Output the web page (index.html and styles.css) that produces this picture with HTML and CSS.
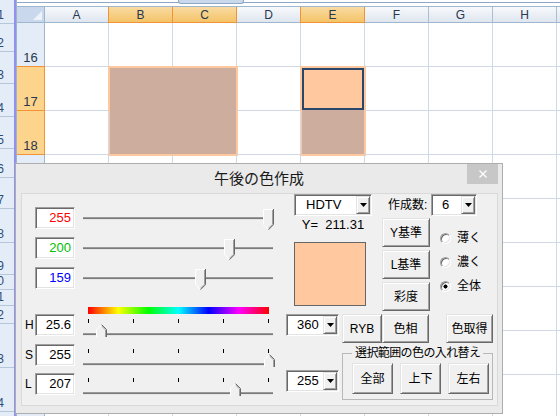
FILE: index.html
```html
<!DOCTYPE html>
<html lang="ja">
<head>
<meta charset="utf-8">
<title>午後の色作成</title>
<link rel="stylesheet" href="styles.css">
</head>
<body>
<div class="screen">
  <div class="backwin">
    <div class="backrows">
      <div>1</div><div>2</div><div>3</div><div>4</div><div>5</div><div>6</div><div>7</div><div>8</div><div>9</div><div>10</div><div>11</div><div>12</div><div>13</div><div>14</div><div>15</div>
    </div>
  </div>
  <div class="splitter"></div>
  <div class="sheet">
    <div class="topstrip"><div class="fxtab"></div></div>
    <div class="grid">
      <div class="corner"><span class="tri"></span></div>
      <div class="ch">A</div><div class="ch sel">B</div><div class="ch sel">C</div><div class="ch">D</div><div class="ch sel">E</div><div class="ch">F</div><div class="ch">G</div><div class="ch">H</div><div class="ch">I</div>

      <div class="rh">16</div><div class="c"></div><div class="c"></div><div class="c"></div><div class="c"></div><div class="c"></div><div class="c"></div><div class="c"></div><div class="c"></div><div class="c"></div>

      <div class="rh sel">17</div><div class="c"></div><div class="range bc"></div><div class="c"></div><div class="range e"><div class="active"></div></div><div class="c"></div><div class="c"></div><div class="c"></div><div class="c"></div>

      <div class="rh sel">18</div><div class="c"></div><div class="c"></div><div class="c"></div><div class="c"></div><div class="c"></div><div class="c"></div>

      <div class="rh">19</div><div class="c"></div><div class="c"></div><div class="c"></div><div class="c"></div><div class="c"></div><div class="c"></div><div class="c"></div><div class="c"></div><div class="c"></div>
      <div class="rh">20</div><div class="c"></div><div class="c"></div><div class="c"></div><div class="c"></div><div class="c"></div><div class="c"></div><div class="c"></div><div class="c"></div><div class="c"></div>
      <div class="rh">21</div><div class="c"></div><div class="c"></div><div class="c"></div><div class="c"></div><div class="c"></div><div class="c"></div><div class="c"></div><div class="c"></div><div class="c"></div>
      <div class="rh">22</div><div class="c"></div><div class="c"></div><div class="c"></div><div class="c"></div><div class="c"></div><div class="c"></div><div class="c"></div><div class="c"></div><div class="c"></div>
      <div class="rh">23</div><div class="c"></div><div class="c"></div><div class="c"></div><div class="c"></div><div class="c"></div><div class="c"></div><div class="c"></div><div class="c"></div><div class="c"></div>
      <div class="rh">24</div><div class="c"></div><div class="c"></div><div class="c"></div><div class="c"></div><div class="c"></div><div class="c"></div><div class="c"></div><div class="c"></div><div class="c"></div>
    </div>
  </div>

  <div class="dialog">
    <div class="titlebar">
      <span></span>
      <span class="title">午後の色作成</span>
      <span class="close"><svg width="8" height="8" viewBox="0 0 8 8"><path d="M0.5 0.5L7.5 7.5M7.5 0.5L0.5 7.5" stroke="#fff" stroke-width="1.2"/></svg></span>
    </div>
    <div class="panel">
      <div class="leftcol">
        <div class="row">
          <span class="lbl"></span>
          <div class="tb red">255</div>
          <div class="slider">
            <div class="track"></div>
            <svg class="thumb dn" style="left:180px" width="11" height="21" viewBox="0 0 11 21"><path d="M0 0H11V15.5L5.5 21L0 15.5Z" fill="#f0f0f0"/><path d="M0.5 15.5V0.5H10" fill="none" stroke="#fff"/><path d="M10.5 0V15.7L5.5 20.7" fill="none" stroke="#696969"/><path d="M9.5 1V15.3L5.5 19.3" fill="none" stroke="#a0a0a0"/><path d="M0.7 15.7L5 20" fill="none" stroke="#fff"/></svg>
          </div>
        </div>
        <div class="row">
          <span class="lbl"></span>
          <div class="tb green">200</div>
          <div class="slider">
            <div class="track"></div>
            <svg class="thumb dn" style="left:141px" width="11" height="21" viewBox="0 0 11 21"><path d="M0 0H11V15.5L5.5 21L0 15.5Z" fill="#f0f0f0"/><path d="M0.5 15.5V0.5H10" fill="none" stroke="#fff"/><path d="M10.5 0V15.7L5.5 20.7" fill="none" stroke="#696969"/><path d="M9.5 1V15.3L5.5 19.3" fill="none" stroke="#a0a0a0"/><path d="M0.7 15.7L5 20" fill="none" stroke="#fff"/></svg>
          </div>
        </div>
        <div class="row">
          <span class="lbl"></span>
          <div class="tb blue">159</div>
          <div class="slider">
            <div class="track"></div>
            <svg class="thumb dn" style="left:112px" width="11" height="21" viewBox="0 0 11 21"><path d="M0 0H11V15.5L5.5 21L0 15.5Z" fill="#f0f0f0"/><path d="M0.5 15.5V0.5H10" fill="none" stroke="#fff"/><path d="M10.5 0V15.7L5.5 20.7" fill="none" stroke="#696969"/><path d="M9.5 1V15.3L5.5 19.3" fill="none" stroke="#a0a0a0"/><path d="M0.7 15.7L5 20" fill="none" stroke="#fff"/></svg>
          </div>
        </div>

        <div class="rainbow"></div>

        <div class="row hsl">
          <span class="lbl">H</span>
          <div class="tb">25.6</div>
          <div class="slider">
            <div class="ticks"></div>
            <div class="track"></div>
            <svg class="thumb up" style="left:13px" width="11" height="13" viewBox="0 0 11 13"><path d="M0 5.5L5.5 0L11 5.5V13H0Z" fill="#f0f0f0"/><path d="M0.5 13V5.7L5.3 0.9" fill="none" stroke="#fff"/><path d="M5.7 0.7L10.5 5.5V13" fill="none" stroke="#696969"/><path d="M5.6 2L9.5 5.9V13" fill="none" stroke="#a0a0a0"/></svg>
          </div>
        </div>
        <div class="row hsl">
          <span class="lbl">S</span>
          <div class="tb">255</div>
          <div class="slider">
            <div class="ticks"></div>
            <div class="track"></div>
            <svg class="thumb up" style="left:181px" width="11" height="13" viewBox="0 0 11 13"><path d="M0 5.5L5.5 0L11 5.5V13H0Z" fill="#f0f0f0"/><path d="M0.5 13V5.7L5.3 0.9" fill="none" stroke="#fff"/><path d="M5.7 0.7L10.5 5.5V13" fill="none" stroke="#696969"/><path d="M5.6 2L9.5 5.9V13" fill="none" stroke="#a0a0a0"/></svg>
          </div>
        </div>
        <div class="row hsl last">
          <span class="lbl">L</span>
          <div class="tb">207</div>
          <div class="slider">
            <div class="ticks"></div>
            <div class="track"></div>
            <svg class="thumb up" style="left:147px" width="11" height="13" viewBox="0 0 11 13"><path d="M0 5.5L5.5 0L11 5.5V13H0Z" fill="#f0f0f0"/><path d="M0.5 13V5.7L5.3 0.9" fill="none" stroke="#fff"/><path d="M5.7 0.7L10.5 5.5V13" fill="none" stroke="#696969"/><path d="M5.6 2L9.5 5.9V13" fill="none" stroke="#a0a0a0"/></svg>
          </div>
        </div>
      </div>

      <div class="rightcol">
        <div class="rtop">
          <div class="mid">
            <div class="combo hdtv"><span>HDTV</span><span class="dd"><svg width="7" height="4" viewBox="0 0 7 4"><path d="M0 0H7L3.5 4Z"/></svg></span></div>
            <div class="yval">Y=&nbsp;&nbsp;211.31</div>
            <div class="swatch"></div>
          </div>
          <div class="side">
            <div class="countrow">
              <span class="clabel">作成数:</span>
              <div class="combo cnt"><span>6</span><span class="dd"><svg width="7" height="4" viewBox="0 0 7 4"><path d="M0 0H7L3.5 4Z"/></svg></span></div>
            </div>
            <div class="btnrad">
              <div class="btncol">
                <button class="btn std">Y基準</button>
                <button class="btn std">L基準</button>
                <button class="btn std">彩度</button>
              </div>
              <div class="radcol">
                <label class="radio"><span class="circle"></span>薄く</label>
                <label class="radio"><span class="circle"></span>濃く</label>
                <label class="radio"><span class="circle on"></span>全体</label>
              </div>
            </div>
          </div>
        </div>
        <div class="rbot">
          <div class="combocol">
            <div class="combo num"><span>360</span><span class="dd"><svg width="7" height="4" viewBox="0 0 7 4"><path d="M0 0H7L3.5 4Z"/></svg></span></div>
            <div class="combo num lower"><span>255</span><span class="dd"><svg width="7" height="4" viewBox="0 0 7 4"><path d="M0 0H7L3.5 4Z"/></svg></span></div>
          </div>
          <div class="actions">
            <div class="actrow">
              <button class="btn ryb">RYB</button>
              <button class="btn hue">色相</button>
              <button class="btn get">色取得</button>
            </div>
            <fieldset class="group">
              <legend>選択範囲の色の入れ替え</legend>
              <div class="grpbtns">
                <button class="btn swap">全部</button>
                <button class="btn swap">上下</button>
                <button class="btn swap">左右</button>
              </div>
            </fieldset>
          </div>
        </div>
      </div>
    </div>
  </div>
</div>
</body>
</html>
```

FILE: styles.css
```css
* { box-sizing: border-box; }
html, body { margin: 0; padding: 0; }
body {
  width: 560px;
  height: 416px;
  overflow: hidden;
  background: #fff;
  font-family: "Liberation Sans", "Noto Sans CJK JP", sans-serif;
}
.screen {
  position: relative;
  display: flex;
  width: 560px;
  height: 416px;
  overflow: hidden;
}

/* window behind, at the left */
.backwin {
  width: 14px;
  flex: none;
  overflow: hidden;
  background: #e4ecf7;
}
.backrows {
  width: 40px;
  margin-left: -26px;
  display: grid;
  grid-template-rows: 24px 28px 32px 33px 32px 29px 31px 34px 32px 15px 16px 18px 44px 44px 20px;
}
.backrows div {
  border-bottom: 1px solid #b6c7dc;
  display: flex;
  justify-content: flex-end;
  align-items: flex-end;
  padding: 0 10px 2px 0;
  font-size: 12px;
  line-height: 12px;
  color: #2a4d7a;
}
.splitter {
  width: 2px;
  flex: none;
  background: #9191ef;
}

/* spreadsheet */
.sheet {
  flex: 1;
  border-left: 1px solid #a3b3c7;
  display: flex;
  flex-direction: column;
  overflow: hidden;
}
.topstrip {
  height: 7px;
  flex: none;
  display: flex;
  align-items: flex-start;
  border-bottom: 1px solid #9eb6ce;
  background: linear-gradient(#fff 0 2px, #8ea7c7 2px 3px, #fff 3px);
}
.fxtab {
  margin-left: 161px;
  width: 66px;
  height: 4px;
  background: #cad8eb;
  border: 1px solid #8ea7c7;
  border-top: 0;
  border-radius: 0 0 3px 3px;
}
.grid {
  display: grid;
  grid-template-columns: 28px repeat(9, 64px);
  grid-template-rows: 16px;
  grid-auto-rows: 44px;
  font-size: 12px;
  color: #27374d;
}
.corner {
  background: #c9d8ec;
  border-right: 1px solid #9eb6ce;
  border-bottom: 1px solid #9eb6ce;
  display: flex;
  justify-content: flex-end;
  align-items: flex-end;
  padding: 0 2px 2px 0;
}
.tri {
  width: 9px;
  height: 9px;
  background: #eef3fa;
  clip-path: polygon(100% 0, 100% 100%, 0 100%);
}
.ch {
  background: linear-gradient(#f7f9fc, #dfe6ef);
  border-right: 1px solid #abbdd3;
  border-bottom: 1px solid #9eb6ce;
  display: flex;
  align-items: center;
  justify-content: center;
  line-height: 14px;
}
.ch.sel {
  background: linear-gradient(#f9dba3, #f3c367);
  border-right-color: #f29436;
  border-bottom-color: #f29436;
  box-shadow: -1px 0 0 #f29436;
}
.rh {
  background: #e4ecf7;
  border-right: 1px solid #9eb6ce;
  border-bottom: 1px solid #9eb6ce;
  display: flex;
  align-items: flex-end;
  justify-content: center;
  padding-bottom: 1px;
  line-height: 14px;
  font-size: 13px;
}
.rh.sel {
  background: #fdd48c;
  border-right-color: #f29436;
  border-bottom-color: #f29436;
  box-shadow: 0 -1px 0 #f29436;
}
.c {
  border-right: 1px solid #d0d7e5;
  border-bottom: 1px solid #d0d7e5;
}
.range {
  grid-row: span 2;
  background: #ccad9e;
  border: 1px solid #fec89f;
  box-shadow: 0 0 0 1px #fec89f;
}
.range.bc { grid-column: span 2; }
.range.e {
  display: flex;
  flex-direction: column;
}
.active {
  height: 42px;
  background: #ffc89f;
  border: 2px solid #2a4668;
}

/* dialog */
.dialog {
  position: absolute;
  left: 15px;
  top: 163px;
  width: 488px;
  height: 251px;
  background: #eaeaea;
  border: 1px solid #adadad;
  display: flex;
  flex-direction: column;
  padding: 0 4px 7px 5px;
  font-size: 12px;
  color: #000;
}
.titlebar {
  height: 29px;
  flex: none;
  margin: 0 -4px 0 -5px;
  display: grid;
  grid-template-columns: 1fr auto 1fr;
}
.title {
  align-self: center;
  padding-top: 1px;
  font-size: 15px;
  line-height: 20px;
  color: #1a1a1a;
}
.close {
  justify-self: end;
  align-self: start;
  margin-right: 4px;
  width: 31px;
  height: 20px;
  background: #c7c7c7;
  display: flex;
  align-items: center;
  justify-content: center;
}
.close svg { display: block; }
.panel {
  flex: 1;
  border: 1px solid #d9d9d9;
  background: #f0f0f0;
  display: flex;
  align-items: flex-start;
  padding-left: 3px;
}
.leftcol {
  width: 249px;
  padding-top: 13px;
  display: flex;
  flex-direction: column;
}
.row {
  display: flex;
  align-items: flex-start;
  height: 22px;
}
.row + .row { margin-top: 8px; }
.row.last { margin-top: 7px; }
.lbl {
  width: 10px;
  font-size: 12px;
  line-height: 22px;
  color: #000;
  overflow: hidden;
}
.tb {
  width: 40px;
  height: 22px;
  background: #fff;
  border: 1px solid;
  border-color: #a0a0a0 #fff #fff #a0a0a0;
  box-shadow: inset 1px 1px 0 #696969, inset -1px -1px 0 #e3e3e3;
  font-size: 13px;
  line-height: 20px;
  text-align: right;
  padding-right: 3px;
  color: #000;
}
.tb.red { color: #ff0000; }
.tb.green { color: #00c000; }
.tb.blue { color: #0000ff; }
.slider {
  position: relative;
  margin-left: 8px;
  width: 191px;
  height: 22px;
}
.track {
  width: 190px;
  height: 3px;
  margin-top: 10px;
  background: linear-gradient(#9a9a9a 0 1px, #7a7a7a 1px 2px, #e6e6e6 2px);
}
.ticks {
  margin: 5px 0 0 5px;
  width: 181px;
  height: 4px;
  background: repeating-linear-gradient(to right, #000 0 1px, transparent 1px 45px);
}
.hsl .track { margin-top: 10px; }
.thumb {
  position: absolute;
  display: block;
}
.thumb.dn { top: 2px; }
.thumb.up { top: 10px; }
.rainbow {
  margin: 18px 0 0 63px;
  width: 181px;
  height: 7px;
  background: linear-gradient(to right, #f00, #ff0 16.67%, #0f0 33.33%, #0ff 50%, #00f 66.67%, #f0f 83.33%, #f00);
}

.rightcol {
  margin-left: 12px;
  display: flex;
  flex-direction: column;
}
.rtop {
  display: flex;
  align-items: flex-start;
}
.mid {
  margin-left: 8px;
  width: 78px;
  display: flex;
  flex-direction: column;
}
.combo {
  height: 22px;
  background: #fff;
  border: 1px solid;
  border-color: #a0a0a0 #fff #fff #a0a0a0;
  box-shadow: inset 1px 1px 0 #696969, inset -1px -1px 0 #e3e3e3;
  display: flex;
  align-items: center;
  padding-left: 10px;
  font-size: 13px;
  line-height: 16px;
}
.combo.hdtv { width: 78px; padding-left: 11px; }
.combo.cnt { width: 46px; }
.combo.num { width: 53px; }
.combo.lower { margin-top: 34px; }
.dd {
  margin-left: auto;
  margin-right: 1px;
  width: 14px;
  height: 18px;
  background: #f0f0f0;
  border: 1px solid;
  border-color: #e3e3e3 #696969 #696969 #e3e3e3;
  box-shadow: inset 1px 1px 0 #fff, inset -1px -1px 0 #a0a0a0;
  display: flex;
  align-items: center;
  justify-content: center;
}
.dd svg { display: block; }
.yval {
  height: 18px;
  line-height: 18px;
  text-align: center;
  font-size: 13px;
  white-space: nowrap;
}
.swatch {
  margin-top: 8px;
  width: 72px;
  height: 64px;
  border: 1px solid #666;
  background: #ffc89f;
}
.side {
  margin-left: 10px;
  display: flex;
  flex-direction: column;
}
.countrow {
  display: flex;
  align-items: center;
  height: 22px;
  padding-left: 6px;
}
.clabel {
  width: 43px;
  font-size: 12px;
  line-height: 16px;
}
.btnrad {
  display: flex;
  margin-top: 2px;
}
.btncol {
  display: flex;
  flex-direction: column;
  gap: 3px;
}
.btn {
  font: inherit;
  font-size: 12px;
  line-height: 14px;
  color: #000;
  padding: 0;
  margin: 0;
  background: #f0f0f0;
  border: 1px solid;
  border-color: #e3e3e3 #696969 #696969 #e3e3e3;
  box-shadow: inset 1px 1px 0 #fff, inset -1px -1px 0 #a0a0a0;
  border-radius: 0;
  white-space: nowrap;
}
.btn.std { width: 48px; height: 29px; }
.radcol {
  margin-left: 10px;
  padding-top: 8px;
  display: flex;
  flex-direction: column;
}
.radio {
  height: 24px;
  display: flex;
  align-items: center;
  gap: 6px;
  font-size: 12px;
  line-height: 14px;
}
.circle {
  width: 11px;
  height: 11px;
  border-radius: 50%;
  border: 1px solid;
  border-color: #a0a0a0 #fff #fff #a0a0a0;
  box-shadow: inset 1px 1px 0 #696969, inset -1px -1px 0 #e3e3e3;
  background: #fff;
}
.circle.on {
  background: radial-gradient(circle, #000 0 1.8px, #fff 2.3px);
}
.rbot {
  display: flex;
  margin-top: 3px;
}
.combocol {
  width: 53px;
  display: flex;
  flex-direction: column;
}
.actions {
  margin-left: 3px;
  display: flex;
  flex-direction: column;
}
.actrow { display: flex; }
.btn.ryb { width: 40px; height: 29px; }
.btn.hue { width: 47px; height: 29px; }
.btn.get { width: 47px; height: 29px; margin-left: 17px; }
.group {
  margin: 3px 0 0 0;
  width: 151px;
  min-width: 0;
  padding: 3px 0 5px 9px;
  border: 1px solid #b8b8b8;
}
.group legend {
  padding: 0 3px;
  font-size: 12px;
  line-height: 14px;
  letter-spacing: -0.6px;
  white-space: nowrap;
}
.grpbtns {
  display: flex;
  gap: 7px;
}
.btn.swap { width: 41px; height: 31px; }
```
